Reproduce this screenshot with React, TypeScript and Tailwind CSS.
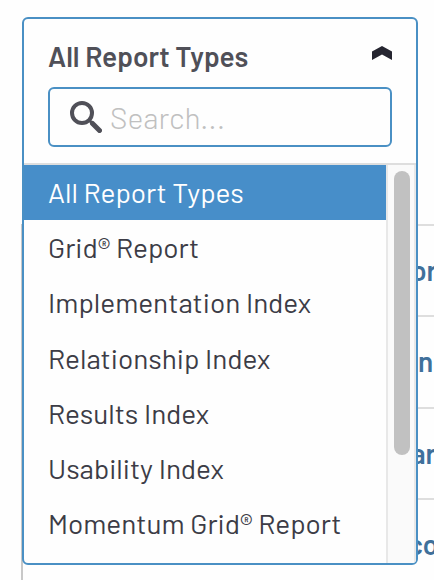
const options = [
  'All Report Types',
  'Grid® Report',
  'Implementation Index',
  'Relationship Index',
  'Results Index',
  'Usability Index',
  'Momentum Grid® Report',
];

const rows = [
  { text: 'or', shift: 'pl-[411px]' },
  { text: 'n', shift: 'pl-[418px]' },
  { text: 'ar', shift: 'pl-[411px]' },
  { text: 'co', shift: 'pl-[408px]' },
];

function Dropdown() {
  return (
    <div className="absolute left-[22px] top-[17px] flex h-[548px] w-[396px] flex-col overflow-hidden rounded-md border-2 border-[#4a90c4] bg-[#fefefe]">
      <div className="flex h-[68px] items-center justify-between px-6 pt-[6px]">
        <span className="whitespace-nowrap text-[28px] font-semibold leading-8 text-[#505058]">All Report Types</span>
        <svg className="mb-[6px] h-[14px] w-5" viewBox="0 0 20 14" fill="#252530">
          <path d="M10 0L20 5.5V14L10 8.5L0 14V5.5Z" />
        </svg>
      </div>
      <div className="mx-6 flex h-[60px] shrink-0 items-center rounded-md border-2 border-[#4a90c4] pl-5">
        <svg className="h-8 w-8 shrink-0" viewBox="0 0 32 32" fill="none" stroke="#505058">
          <circle cx="12" cy="12" r="10" strokeWidth="4" />
          <path d="M19 19L22 22" strokeWidth="3" />
          <path d="M22.5 22.5L29.5 29.5" strokeWidth="5" strokeLinecap="round" />
        </svg>
        <span className="ml-2 text-[30px] font-light leading-8 text-[#c0c0c0]">Search...</span>
      </div>
      <div className="mt-4 flex min-h-0 flex-1 border-t-2 border-[#dedede]">
        <div className="flex w-[362px] shrink-0 flex-col overflow-hidden">
          {options.map((option, i) => (
            <div
              key={option}
              className={`flex h-[55.25px] shrink-0 items-center pb-[1.65px] pl-6 text-[28px] font-normal leading-8 ${i === 0 ? 'bg-[#478ec9] text-white' : 'text-[#3c3c46]'}`}
            >
              <span className="whitespace-nowrap">{option}</span>
            </div>
          ))}
        </div>
        <div className="flex w-[30px] border-x-2 border-[#e8e8e8] bg-[#fafafa] pl-[6px] pt-[6px]">
          <div className="h-[284px] w-4 rounded-full bg-[#c1c1c1]" />
        </div>
      </div>
    </div>
  );
}

export default function App() {
  return (
    <main className="relative h-[580px] w-[434px] overflow-hidden bg-[#fefefe] font-['Barlow','Roboto',sans-serif]">
      <div className="pl-[21px] pt-[224px]">
        <div className="border-l-2 border-[#c8c8c8]">
          {rows.map((row) => (
            <div key={row.text} className="h-[91.33px] border-t-2 border-[#dedede]">
              <div className={`-ml-[23px] whitespace-nowrap pt-[28px] text-[28px] font-semibold leading-8 text-[#3f709b] ${row.shift}`}>{row.text}</div>
            </div>
          ))}
        </div>
      </div>
      <Dropdown />
    </main>
  );
}
